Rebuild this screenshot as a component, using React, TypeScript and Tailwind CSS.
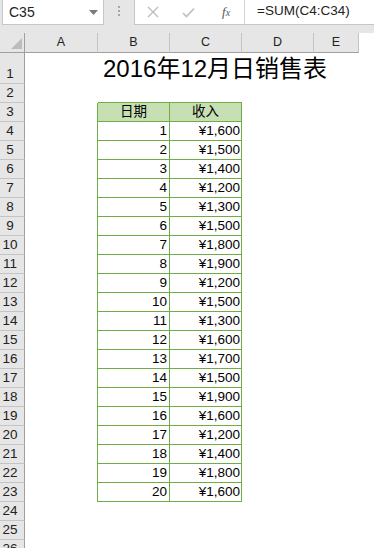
import React from "react";

const incomes = [1600, 1500, 1400, 1200, 1300, 1500, 1800, 1900, 1200, 1500, 1300, 1600, 1700, 1500, 1900, 1600, 1200, 1400, 1800, 1600];

const font = { fontFamily: '"Liberation Sans", Arial, "Noto Sans CJK SC", sans-serif' };

function RowHeader({ n, tall }: { n: number; tall?: boolean }) {
  return (
    <div
      className={`w-[25px] shrink-0 bg-[#e6e6e6] border-r border-b border-r-[#9f9f9f] border-b-[#c4c4c4] flex items-end justify-center pr-[4px] pb-[1px] text-[13.5px] text-[#222] leading-[17px] ${tall ? "h-[31px]" : "h-[19px]"}`}
    >
      {n}
    </div>
  );
}

export default function App() {
  const rows: React.ReactNode[] = [];
  rows.push(
    <div key={1} className="flex">
      <RowHeader n={1} tall />
      <div className="flex-1 h-[31px] bg-white flex items-end pl-[78px] pb-[1px]">
        <span className="text-[24px] leading-[28px] text-black whitespace-nowrap">
          2016年12月日销售表
        </span>
      </div>
    </div>
  );
  rows.push(
    <div key={2} className="flex">
      <RowHeader n={2} />
      <div className="flex-1 h-[19px] bg-white" />
    </div>
  );
  rows.push(
    <div key={3} className="flex">
      <RowHeader n={3} />
      <div className="w-[73px] h-[19px] border-r border-[#70ad47]" />
      <div className="w-[72px] h-[20px] -mt-[1px] bg-[#c6e0b4] border-r border-t border-b border-[#70ad47] flex items-center justify-center text-[13.5px] leading-[16px] text-black">
        日期
      </div>
      <div className="w-[72px] h-[20px] -mt-[1px] bg-[#c6e0b4] border-r border-t border-b border-[#70ad47] flex items-center justify-center text-[13.5px] leading-[16px] text-black">
        收入
      </div>
      <div className="flex-1" />
    </div>
  );
  incomes.forEach((v, i) => {
    rows.push(
      <div key={4 + i} className="flex">
        <RowHeader n={4 + i} />
        <div className="w-[73px] h-[19px] border-r border-[#70ad47]" />
        <div className="w-[72px] h-[19px] border-r border-b border-[#70ad47] flex items-end justify-end pr-[2px] pb-[1px] text-[13.5px] leading-[16px] text-black">
          {i + 1}
        </div>
        <div className="w-[72px] h-[19px] border-r border-b border-[#70ad47] flex items-end justify-end pr-[1px] pb-[1px] text-[13.5px] leading-[16px] text-black">
          ¥{v.toLocaleString("en-US")}
        </div>
        <div className="flex-1" />
      </div>
    );
  });
  [24, 25, 26].forEach((n) =>
    rows.push(
      <div key={n} className="flex">
        <RowHeader n={n} />
        <div className="flex-1 h-[19px] bg-white" />
      </div>
    )
  );

  const cols: [string, string][] = [
    ["A", "w-[73px]"],
    ["B", "w-[72px]"],
    ["C", "w-[72px]"],
    ["D", "w-[72px]"],
    ["E", "w-[45px]"],
  ];

  return (
    <div className="w-[374px] h-[548px] overflow-hidden bg-white relative" style={font}>
      <div className="h-[33px] bg-[#e6e6e6] flex items-start">
        <div className="ml-[2px] w-[102px] h-[25px] bg-white border-l border-r border-b border-[#c6c6c6] flex items-center pl-[6px] pr-[5px]">
          <span className="text-[14px] text-[#222] leading-[16px] flex-1">C35</span>
          <svg width="9" height="5" viewBox="0 0 9 5">
            <path d="M0 0 H9 L4.5 5 Z" fill="#7a7a7a" />
          </svg>
        </div>
        <div className="w-[30px] h-[25px] flex items-center justify-center">
          <div className="flex flex-col gap-[2px] -mt-[3px]">
            <div className="w-[2px] h-[2px] bg-[#a6a6a6]" />
            <div className="w-[2px] h-[2px] bg-[#a6a6a6]" />
            <div className="w-[2px] h-[2px] bg-[#a6a6a6]" />
          </div>
        </div>
        <div className="flex-1 h-[25px] bg-white border-l border-b border-[#c6c6c6] flex items-center">
          <div className="w-[110px] h-full flex items-center pl-[12px] border-r border-[#d4d4d4]">
            <svg width="12" height="12" viewBox="0 0 12 12" className="mr-[23px]">
              <path d="M1 1 L11 11 M11 1 L1 11" stroke="#bdbdbd" strokeWidth="1.4" />
            </svg>
            <svg width="13" height="11" viewBox="0 0 13 11" className="mr-[27px]">
              <path d="M1 6 L4.5 9.5 L12 1.5" stroke="#bdbdbd" strokeWidth="1.6" fill="none" />
            </svg>
            <span className="text-[13px] italic text-[#555] leading-[14px]" style={{ fontFamily: '"Liberation Serif", "Times New Roman", serif' }}>
              f<span className="text-[10px]">x</span>
            </span>
          </div>
          <span className="pl-[12px] text-[13.5px] text-[#222] leading-[16px] -mt-[2px]">=SUM(C4:C34)</span>
        </div>
      </div>
      <div className="flex h-[20px]">
        <div className="w-[25px] h-[20px] bg-[#e6e6e6] border-r border-b border-[#9f9f9f] relative">
          <svg width="11" height="11" viewBox="0 0 11 11" className="absolute right-[2px] bottom-[3px]">
            <path d="M11 0 V11 H0 Z" fill="#bcbcbc" />
          </svg>
        </div>
        {cols.map(([c, w]) => (
          <div
            key={c}
            className={`${w} h-[20px] bg-[#e6e6e6] border-r border-b border-r-[#c4c4c4] border-b-[#9f9f9f] flex items-end justify-center pb-[2px] text-[12.5px] leading-[15px] text-[#222]`}
          >
            {c}
          </div>
        ))}
        <div className="flex-1 bg-white" />
      </div>
      {rows}
    </div>
  );
}
